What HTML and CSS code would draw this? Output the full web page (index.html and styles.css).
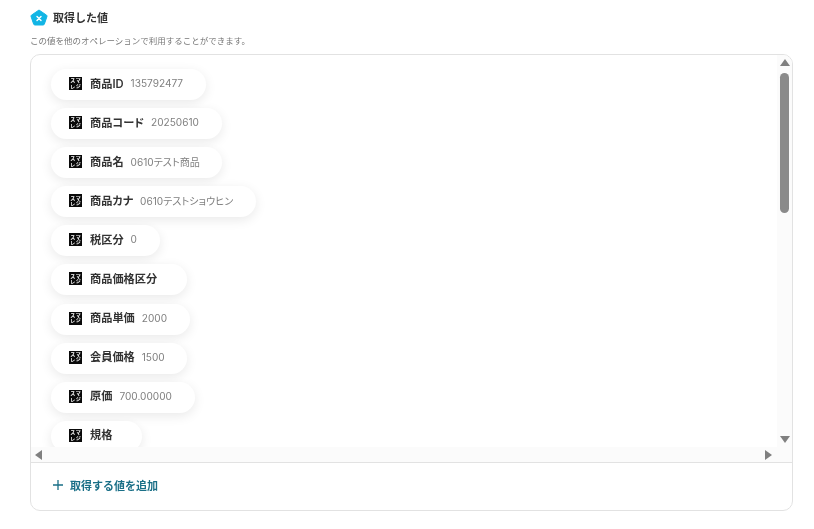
FILE: index.html
```html
<!DOCTYPE html>
<html lang="ja">
<head>
  <meta charset="UTF-8" />
  <title>取得した値</title>
  <link rel="stylesheet" href="styles.css">
</head>
<body>
  <div class="section-title">
    <svg class="title-icon" viewBox="0 0 18 18" width="18" height="18">
      <path d="M9 1 L16.6 6.2 Q17.2 6.7 17 7.4 L14.4 15 Q14.1 16 13 16 L5 16 Q3.9 16 3.6 15 L1 7.4 Q0.8 6.7 1.4 6.2 Z" fill="#12b5e5" stroke="#12b5e5" stroke-linejoin="round"/>
      <path d="M7 7.4 L11 11.6 M11 7.4 L7 11.6" stroke="#fff" stroke-width="1.4" stroke-linecap="round"/>
    </svg>
    <span>取得した値</span>
  </div>
  <p class="section-desc">この値を他のオペレーションで利用することができます。</p>

  <div class="box">
    <div class="scroll-area">
      <ul class="pill-list">
        <li class="pill"><span class="logo"><i>ス</i><i>マ</i><i>レ</i><i>ジ</i></span><b>商品ID</b><span class="val">135792477</span></li>
        <li class="pill"><span class="logo"><i>ス</i><i>マ</i><i>レ</i><i>ジ</i></span><b>商品コード</b><span class="val">20250610</span></li>
        <li class="pill"><span class="logo"><i>ス</i><i>マ</i><i>レ</i><i>ジ</i></span><b>商品名</b><span class="val">0610テスト商品</span></li>
        <li class="pill"><span class="logo"><i>ス</i><i>マ</i><i>レ</i><i>ジ</i></span><b>商品カナ</b><span class="val">0610テストショウヒン</span></li>
        <li class="pill"><span class="logo"><i>ス</i><i>マ</i><i>レ</i><i>ジ</i></span><b>税区分</b><span class="val">0</span></li>
        <li class="pill"><span class="logo"><i>ス</i><i>マ</i><i>レ</i><i>ジ</i></span><b>商品価格区分</b><span class="val"></span></li>
        <li class="pill"><span class="logo"><i>ス</i><i>マ</i><i>レ</i><i>ジ</i></span><b>商品単価</b><span class="val">2000</span></li>
        <li class="pill"><span class="logo"><i>ス</i><i>マ</i><i>レ</i><i>ジ</i></span><b>会員価格</b><span class="val">1500</span></li>
        <li class="pill"><span class="logo"><i>ス</i><i>マ</i><i>レ</i><i>ジ</i></span><b>原価</b><span class="val">700.00000</span></li>
        <li class="pill"><span class="logo"><i>ス</i><i>マ</i><i>レ</i><i>ジ</i></span><b>規格</b><span class="val"></span></li>
      </ul>
      <div class="vbar">
        <span class="arrow up"></span>
        <span class="thumb"></span>
        <span class="arrow down"></span>
      </div>
      <div class="hbar">
        <span class="arrow left"></span>
        <span class="arrow right"></span>
      </div>
      <div class="corner"></div>
    </div>
    <div class="add-row">
      <svg viewBox="0 0 12 12" width="12" height="12">
        <path d="M6 1 V11 M1 6 H11" stroke="#1a6f87" stroke-width="1.3" fill="none"/>
      </svg>
      <span>取得する値を追加</span>
    </div>
  </div>
</body>
</html>
```

FILE: styles.css
```css
body {
  margin: 0;
  padding: 9px 21px 0 30px;
  background-color: white;
  font-family: Inter, "Noto Sans CJK JP", sans-serif;
  color: #333;
  will-change: transform;
}

.section-title {
  display: flex;
  align-items: center;
  gap: 5px;
  height: 18px;
  font-size: 11px;
  font-weight: 600;
  color: #333;
}

.section-title span {
  padding-bottom: 2px;
}

.section-desc {
  margin: 9px 0 0;
  height: 18px;
  line-height: 10px;
  font-size: 8.5px;
  color: #777;
}

.box {
  height: 455px;
  border: 1px solid #e2e2e2;
  border-radius: 10px;
  display: flex;
  flex-direction: column;
  overflow: hidden;
}

.scroll-area {
  display: grid;
  grid-template-columns: 1fr 15px;
  grid-template-rows: 392px 15px;
  border-bottom: 1px solid #e2e2e2;
}

.pill-list {
  list-style: none;
  margin: 0;
  padding: 14px 0 0 20px;
  overflow: hidden;
  display: flex;
  flex-direction: column;
  align-items: flex-start;
  gap: 8.1px;
}

.pill {
  flex: none;
  height: 31px;
  display: flex;
  align-items: center;
  padding: 0 22.6px 0 18px;
  border-radius: 16px;
  background-color: white;
  box-shadow: 0 3px 12px rgba(0, 0, 0, 0.09);
  font-size: 11.2px;
  font-feature-settings: "palt";
}

.pill b {
  margin-left: 8px;
  padding-bottom: 4px;
  font-weight: 600;
  color: #333;
}

.val {
  margin-left: 7px;
  padding-bottom: 3px;
  font-size: 10.1px;
  color: #808080;
}

.logo {
  width: 13px;
  height: 13px;
  flex: none;
  margin-bottom: 2px;
  padding: 1px;
  box-sizing: border-box;
  background-color: #0a0a0a;
  display: grid;
  grid-template-columns: 1fr 1fr;
  grid-template-rows: 1fr 1fr;
  place-items: center;
  overflow: hidden;
}

.logo i {
  font-style: normal;
  font-size: 5px;
  line-height: 5px;
  font-weight: 700;
  color: white;
}

.vbar {
  background-color: #fbfbfb;
  display: flex;
  flex-direction: column;
  align-items: center;
}

.thumb {
  width: 9px;
  height: 140px;
  margin-top: 7px;
  background-color: #8a8a8a;
  border-radius: 5px;
}

.hbar {
  background-color: #fbfbfb;
  display: flex;
  justify-content: space-between;
  align-items: center;
  padding: 0 5px 0 4px;
}

.corner {
  background-color: #fbfbfb;
}

.arrow {
  display: block;
  width: 0;
  height: 0;
  border-style: solid;
  border-color: transparent;
}

.arrow.up {
  margin-top: 4px;
  border-width: 0 5px 7px;
  border-bottom-color: #808080;
}

.arrow.down {
  margin-top: auto;
  margin-bottom: 4px;
  border-width: 7px 5px 0;
  border-top-color: #808080;
}

.arrow.left {
  border-width: 5px 7px 5px 0;
  border-right-color: #808080;
}

.arrow.right {
  border-width: 5px 0 5px 7px;
  border-left-color: #808080;
}

.add-row {
  flex: 1;
  display: flex;
  align-items: center;
  gap: 6px;
  padding: 0 0 4px 21px;
  font-size: 11px;
  font-weight: 600;
  color: #1a6f87;
}
```
